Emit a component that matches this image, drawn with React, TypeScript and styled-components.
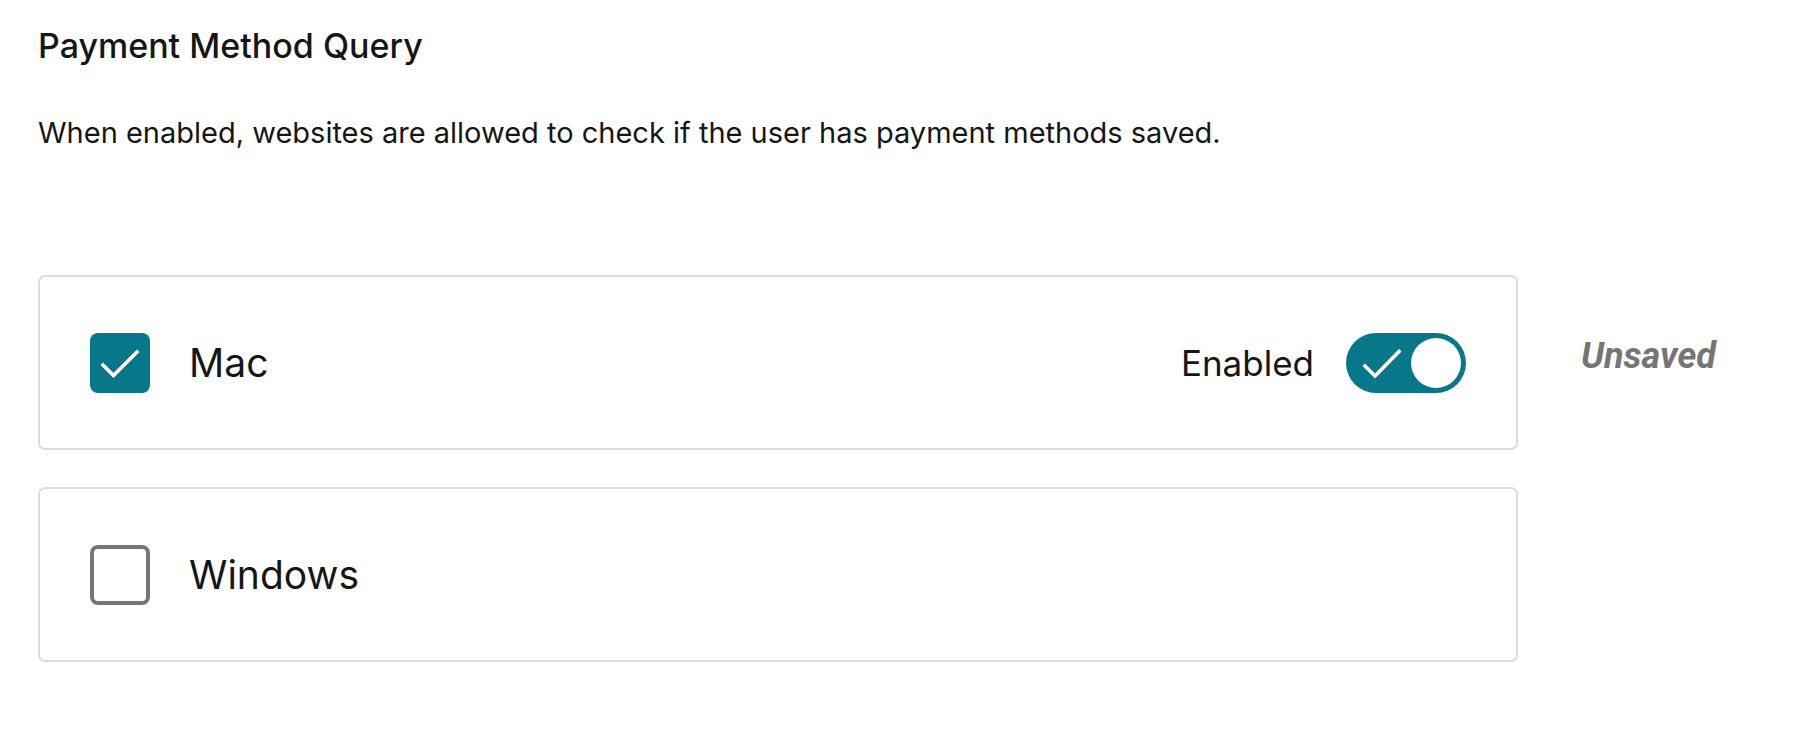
import styled, { createGlobalStyle } from "styled-components";

export default App;

const GlobalStyle = createGlobalStyle`
  * {
    box-sizing: border-box;
  }

  body {
    margin: 0;
    background: #ffffff;
    color: #161616;
    font-family: Inter, "Noto Sans", sans-serif;
  }
`;

interface Platform {
  name: string;
  checked: boolean;
  enabled?: boolean;
  unsaved?: boolean;
}

const platforms: Platform[] = [
  { name: "Mac", checked: true, enabled: true, unsaved: true },
  { name: "Windows", checked: false },
];

function CheckIcon({ size }: { size: number }) {
  return (
    <svg width={size} height={size} viewBox="0 0 60 60" fill="none">
      <path
        d="M13 32 L23.5 42.5 L47 19"
        stroke="#ffffff"
        strokeWidth="3.6"
        strokeLinecap="square"
      />
    </svg>
  );
}

function App() {
  return (
    <>
      <GlobalStyle />
      <Page>
        <Title>Payment Method Query</Title>
        <Description>
          When enabled, websites are allowed to check if the user has payment
          methods saved.
        </Description>

        <List>
          {platforms.map((platform) => (
            <Row key={platform.name}>
              <Card>
                <Checkbox $checked={platform.checked}>
                  {platform.checked && <CheckIcon size={60} />}
                </Checkbox>
                <Label>{platform.name}</Label>
                {platform.checked && (
                  <Status>
                    <StatusText>Enabled</StatusText>
                    <Toggle $on={!!platform.enabled}>
                      <ToggleCheck>
                        <svg width="40" height="30" viewBox="0 0 40 30" fill="none">
                          <path
                            d="M3 17 L13 27 L37 2.5"
                            stroke="#ffffff"
                            strokeWidth="3.6"
                            strokeLinecap="square"
                          />
                        </svg>
                      </ToggleCheck>
                      <Knob />
                    </Toggle>
                  </Status>
                )}
              </Card>
              {platform.unsaved && <Unsaved>Unsaved</Unsaved>}
            </Row>
          ))}
        </List>
      </Page>
    </>
  );
}

const Page = styled.div`
  padding: 26px 38px;
`;

const Title = styled.h2`
  margin: 0;
  font-size: 34px;
  line-height: 40px;
  font-weight: 550;
  color: #161616;
`;

const Description = styled.p`
  margin: 47px 0 0;
  font-size: 29px;
  line-height: 40px;
  font-weight: 400;
`;

const List = styled.div`
  display: flex;
  flex-direction: column;
  gap: 37px;
  margin-top: 122px;
`;

const Row = styled.div`
  display: flex;
  align-items: center;
  gap: 63px;
`;

const Card = styled.div`
  display: flex;
  align-items: center;
  width: 1480px;
  height: 175px;
  padding: 0 50px;
  border: 2px solid #dcdcdc;
  border-radius: 7px;
`;

const Checkbox = styled.div<{ $checked: boolean }>`
  display: flex;
  width: 60px;
  height: 60px;
  flex-shrink: 0;
  border-radius: 8px;
  background: ${(p) => (p.$checked ? "#077789" : "#ffffff")};
  border: ${(p) => (p.$checked ? "none" : "4px solid #767676")};
`;

const Label = styled.span`
  margin-left: 39px;
  font-size: 39px;
  line-height: 48px;
  color: #161616;
`;

const Status = styled.div`
  display: flex;
  align-items: center;
  gap: 32px;
  margin-left: auto;
`;

const StatusText = styled.span`
  font-size: 35px;
  line-height: 44px;
  color: #161616;
`;

const Toggle = styled.div<{ $on: boolean }>`
  display: flex;
  align-items: center;
  justify-content: space-between;
  width: 120px;
  height: 60px;
  padding: 5px;
  border-radius: 30px;
  background: ${(p) => (p.$on ? "#077789" : "#8d8d8d")};
`;

const ToggleCheck = styled.span`
  display: flex;
  margin-left: 11px;
  margin-top: 2px;
`;

const Knob = styled.span`
  width: 50px;
  height: 50px;
  border-radius: 50%;
  background: #ffffff;
`;

const Unsaved = styled.span`
  padding-bottom: 14px;
  font-family: Roboto, "Liberation Sans", sans-serif;
  font-size: 36px;
  font-style: italic;
  font-weight: 700;
  color: #757575;
`;
